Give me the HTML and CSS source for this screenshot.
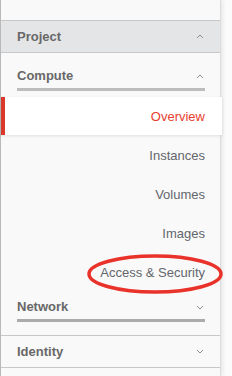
FILE: index.html
```html
<!DOCTYPE html>
<html lang="en">
<head>
    <meta charset="UTF-8">
    <title>Project navigation</title>
    <link rel="stylesheet" href="styles.css">
</head>
<body>
    <div class="page">
        <nav class="sidebar">
            <div class="top"></div>

            <div class="panel-header open">
                <span>Project</span>
                <svg class="caret" width="8" height="5" viewBox="0 0 8 5"><polyline points="1,4 4,1 7,4"/></svg>
            </div>

            <div class="group">
                <div class="group-title">
                    <span>Compute</span>
                    <svg class="caret" width="8" height="5" viewBox="0 0 8 5"><polyline points="1,4 4,1 7,4"/></svg>
                </div>
                <ul class="menu">
                    <li class="active">Overview</li>
                    <li>Instances</li>
                    <li>Volumes</li>
                    <li>Images</li>
                    <li>Access &amp; Security</li>
                </ul>
            </div>

            <div class="group closed">
                <div class="group-title">
                    <span>Network</span>
                    <svg class="caret" width="8" height="5" viewBox="0 0 8 5"><polyline points="1,1 4,4 7,1"/></svg>
                </div>
            </div>

            <div class="panel-header">
                <span>Identity</span>
                <svg class="caret" width="8" height="5" viewBox="0 0 8 5"><polyline points="1,1 4,4 7,1"/></svg>
            </div>
        </nav>

        <!-- hand-drawn highlight round the menu entry -->
        <svg class="mark" width="140" height="42" viewBox="0 0 140 42">
            <ellipse cx="68" cy="21" rx="66" ry="18"/>
        </svg>
    </div>
</body>
</html>
```

FILE: styles.css
```css
html, body {
    margin: 0;
    padding: 0;
    background-color: #fbfbfb;
    font-family: "Liberation Sans", Arial, sans-serif;
    font-size: 13px;
}

.page {
    position: relative;
    height: 376px;
    overflow: hidden;
}

.sidebar {
    width: 219px;
    height: 100%;
    background-color: #f9f9f9;
    border-left: 1px solid #b9b9b9;
    border-right: 1px solid #dcdcdc;
    box-shadow: 2px 0 4px rgba(0, 0, 0, 0.08);
}

.top {
    height: 20px;
    border-bottom: 1px solid #c8c8c8;
}

.panel-header {
    display: flex;
    align-items: center;
    justify-content: space-between;
    height: 31px;
    padding: 0 16px 0 16px;
    border-bottom: 1px solid #c8c8c8;
    font-weight: bold;
    color: #686868;
}

.panel-header.open {
    background-color: #e4e5e7;
}

.caret {
    fill: none;
    stroke: #8f8f8f;
    stroke-width: 1;
}

.group-title {
    display: flex;
    align-items: center;
    justify-content: space-between;
    margin: 0 15px 0 16px;
    padding: 15px 1px 4px 0;
    line-height: 16px;
    font-weight: bold;
    color: #686868;
    border-bottom: 3px solid #bdbdbd;
}

.group.closed .group-title {
    padding-top: 7px;
    border-bottom-color: #ababab;
}

.group.closed {
    padding-bottom: 13px;
    border-bottom: 1px solid #c8c8c8;
}

.menu {
    list-style: none;
    margin: 6px 0 0;
    padding: 0;
}

.menu li {
    height: 39px;
    line-height: 40px;
    padding-right: 15px;
    text-align: right;
    color: #63666c;
}

.menu li.active {
    margin-right: -2px;
    margin-bottom: 1px;
    padding-right: 17px;
    height: 38px;
    line-height: 39px;
    border-left: 4px solid #d8392b;
    background-color: #fff;
    color: #e8402f;
    box-shadow: 0 1px 3px rgba(0, 0, 0, 0.1);
}

.mark {
    position: absolute;
    left: 87px;
    top: 253px;
}

.mark ellipse {
    fill: none;
    stroke: #e9322a;
    stroke-width: 3.5;
}
```
